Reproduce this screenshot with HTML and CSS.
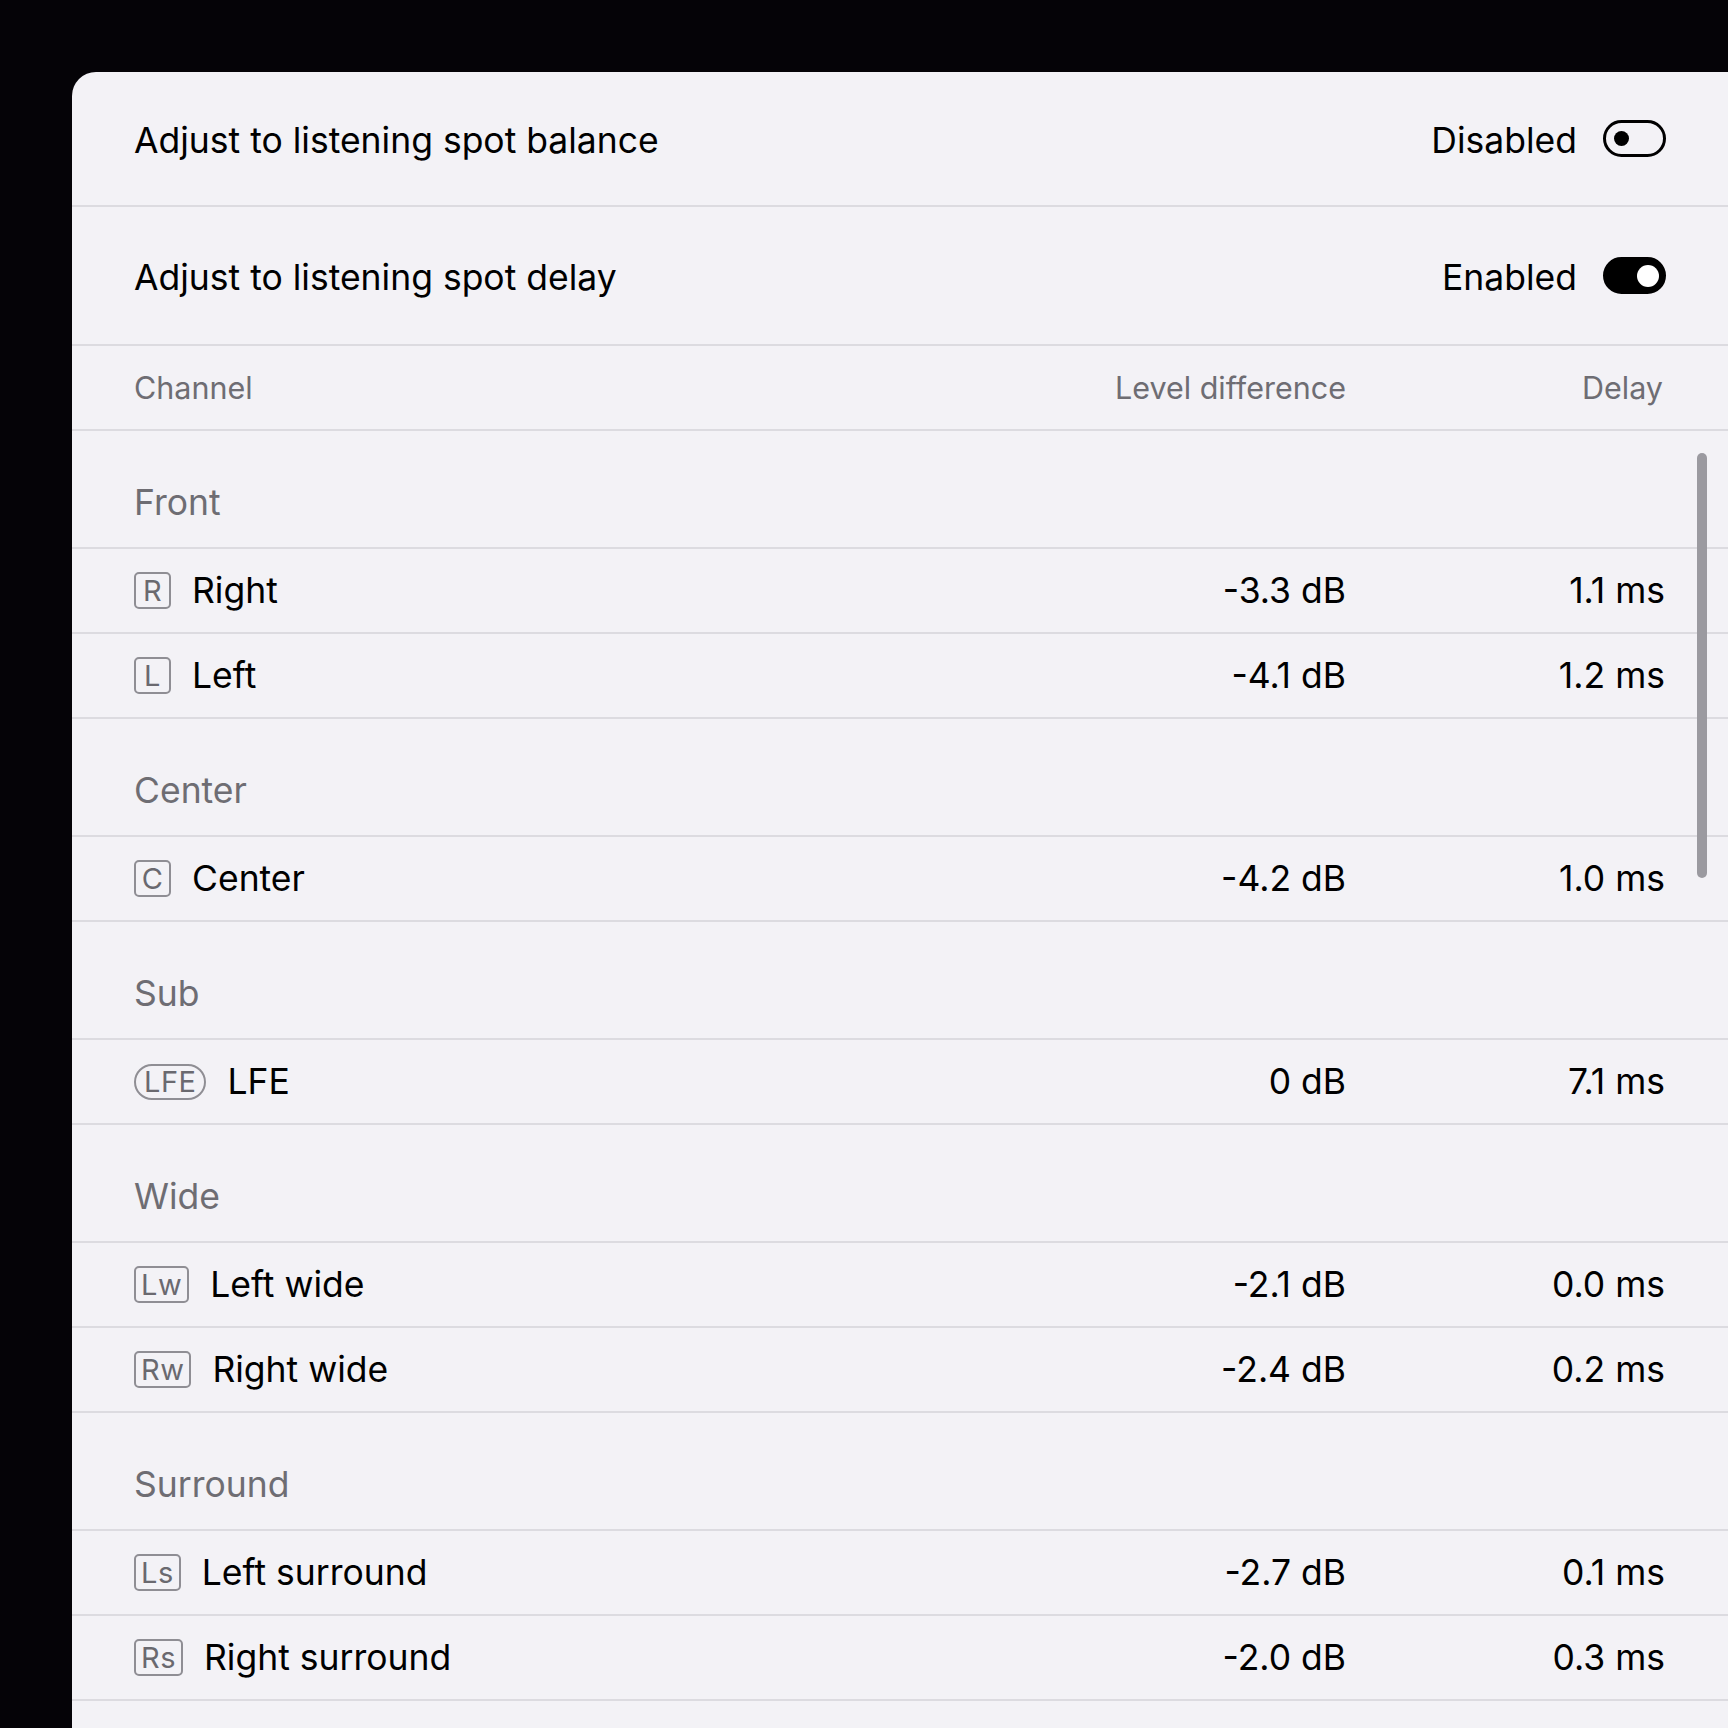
FILE: index.html
```html
<!DOCTYPE html>
<html lang="en">
<head>
    <meta charset="UTF-8">
    <meta name="viewport" content="width=device-width, initial-scale=1.0">
    <title>Listening spot</title>
    <link rel="stylesheet" href="styles.css">
</head>
<body>
    <div class="panel">
        <div class="setting-row">
            <span class="setting-label">Adjust to listening spot balance</span>
            <div class="setting-control">
                <span class="setting-state">Disabled</span>
                <div class="toggle"><div class="toggle-knob"></div></div>
            </div>
        </div>
        <div class="setting-row">
            <span class="setting-label">Adjust to listening spot delay</span>
            <div class="setting-control">
                <span class="setting-state">Enabled</span>
                <div class="toggle on"><div class="toggle-knob"></div></div>
            </div>
        </div>

        <div class="table-row table-head">
            <span>Channel</span>
            <span class="num">Level difference</span>
            <span class="num">Delay</span>
        </div>

        <div class="group-title">Front</div>
        <div class="table-row">
            <span class="channel"><span class="badge">R</span>Right</span>
            <span class="num">-3.3 dB</span>
            <span class="num">1.1 ms</span>
        </div>
        <div class="table-row">
            <span class="channel"><span class="badge">L</span>Left</span>
            <span class="num">-4.1 dB</span>
            <span class="num">1.2 ms</span>
        </div>

        <div class="group-title">Center</div>
        <div class="table-row">
            <span class="channel"><span class="badge">C</span>Center</span>
            <span class="num">-4.2 dB</span>
            <span class="num">1.0 ms</span>
        </div>

        <div class="group-title">Sub</div>
        <div class="table-row">
            <span class="channel"><span class="badge pill">LFE</span>LFE</span>
            <span class="num">0 dB</span>
            <span class="num">7.1 ms</span>
        </div>

        <div class="group-title">Wide</div>
        <div class="table-row">
            <span class="channel"><span class="badge">Lw</span>Left wide</span>
            <span class="num">-2.1 dB</span>
            <span class="num">0.0 ms</span>
        </div>
        <div class="table-row">
            <span class="channel"><span class="badge">Rw</span>Right wide</span>
            <span class="num">-2.4 dB</span>
            <span class="num">0.2 ms</span>
        </div>

        <div class="group-title">Surround</div>
        <div class="table-row">
            <span class="channel"><span class="badge">Ls</span>Left surround</span>
            <span class="num">-2.7 dB</span>
            <span class="num">0.1 ms</span>
        </div>
        <div class="table-row">
            <span class="channel"><span class="badge">Rs</span>Right surround</span>
            <span class="num">-2.0 dB</span>
            <span class="num">0.3 ms</span>
        </div>

        <div class="scrollbar"></div>
    </div>
</body>
</html>
```

FILE: styles.css
```css
html, body {
    height: 100%;
}

body {
    margin: 0;
    background: #050307;
    font-family: Inter, 'Noto Sans', sans-serif;
    color: #000;
    overflow: hidden;
}

.panel {
    position: relative;
    margin: 72px 0 0 72px;
    min-height: 1700px;
    background: #f3f2f6;
    border-top-left-radius: 24px;
}

.setting-row {
    display: flex;
    align-items: center;
    justify-content: space-between;
    height: 135px;
    padding: 3px 62px 0;
    border-bottom: 2px solid #dcdbe0;
    box-sizing: border-box;
}

.setting-row + .setting-row {
    height: 139px;
}

.setting-label,
.setting-state {
    font-size: 35.5px;
}

.setting-control {
    display: flex;
    align-items: center;
    gap: 26px;
}

.toggle {
    position: relative;
    width: 63px;
    height: 37px;
    margin-top: -3px;
    border: 3px solid #000;
    border-radius: 19px;
    box-sizing: border-box;
}

.toggle-knob {
    position: absolute;
    top: 8px;
    left: 8px;
    width: 15px;
    height: 15px;
    border-radius: 50%;
    background: #000;
}

.toggle.on {
    background: #000;
}

.toggle.on .toggle-knob {
    top: 4.5px;
    left: auto;
    right: 4px;
    width: 22px;
    height: 22px;
    background: #fff;
}

.table-row {
    display: grid;
    grid-template-columns: 1fr auto 319px;
    align-items: center;
    height: 85px;
    padding: 0 63px 0 62px;
    border-bottom: 2px solid #dcdbe0;
    box-sizing: border-box;
    font-size: 35.5px;
}

.table-head {
    font-size: 30.5px;
    color: #6e6d73;
}

.table-head .num:last-child {
    padding-right: 2px;
}

.num {
    text-align: right;
}

.channel {
    display: flex;
    align-items: center;
    gap: 21px;
}

.badge {
    display: inline-flex;
    align-items: center;
    justify-content: center;
    min-width: 37px;
    height: 37px;
    padding: 0 5px;
    border: 2px solid #8f8e94;
    border-radius: 5px;
    box-sizing: border-box;
    font-size: 29px;
    letter-spacing: 0.5px;
    color: #6a696f;
}

.badge.pill {
    height: 36px;
    padding: 0 8px;
    border-radius: 18px;
}

.group-title {
    height: 118px;
    padding: 52px 62px 0;
    border-bottom: 2px solid #dcdbe0;
    box-sizing: border-box;
    font-size: 35.5px;
    line-height: 40px;
    color: #6e6d73;
}

.scrollbar {
    position: absolute;
    top: 381px;
    right: 21px;
    width: 10px;
    height: 425px;
    border-radius: 5px;
    background: #9b9aa0;
}
```
